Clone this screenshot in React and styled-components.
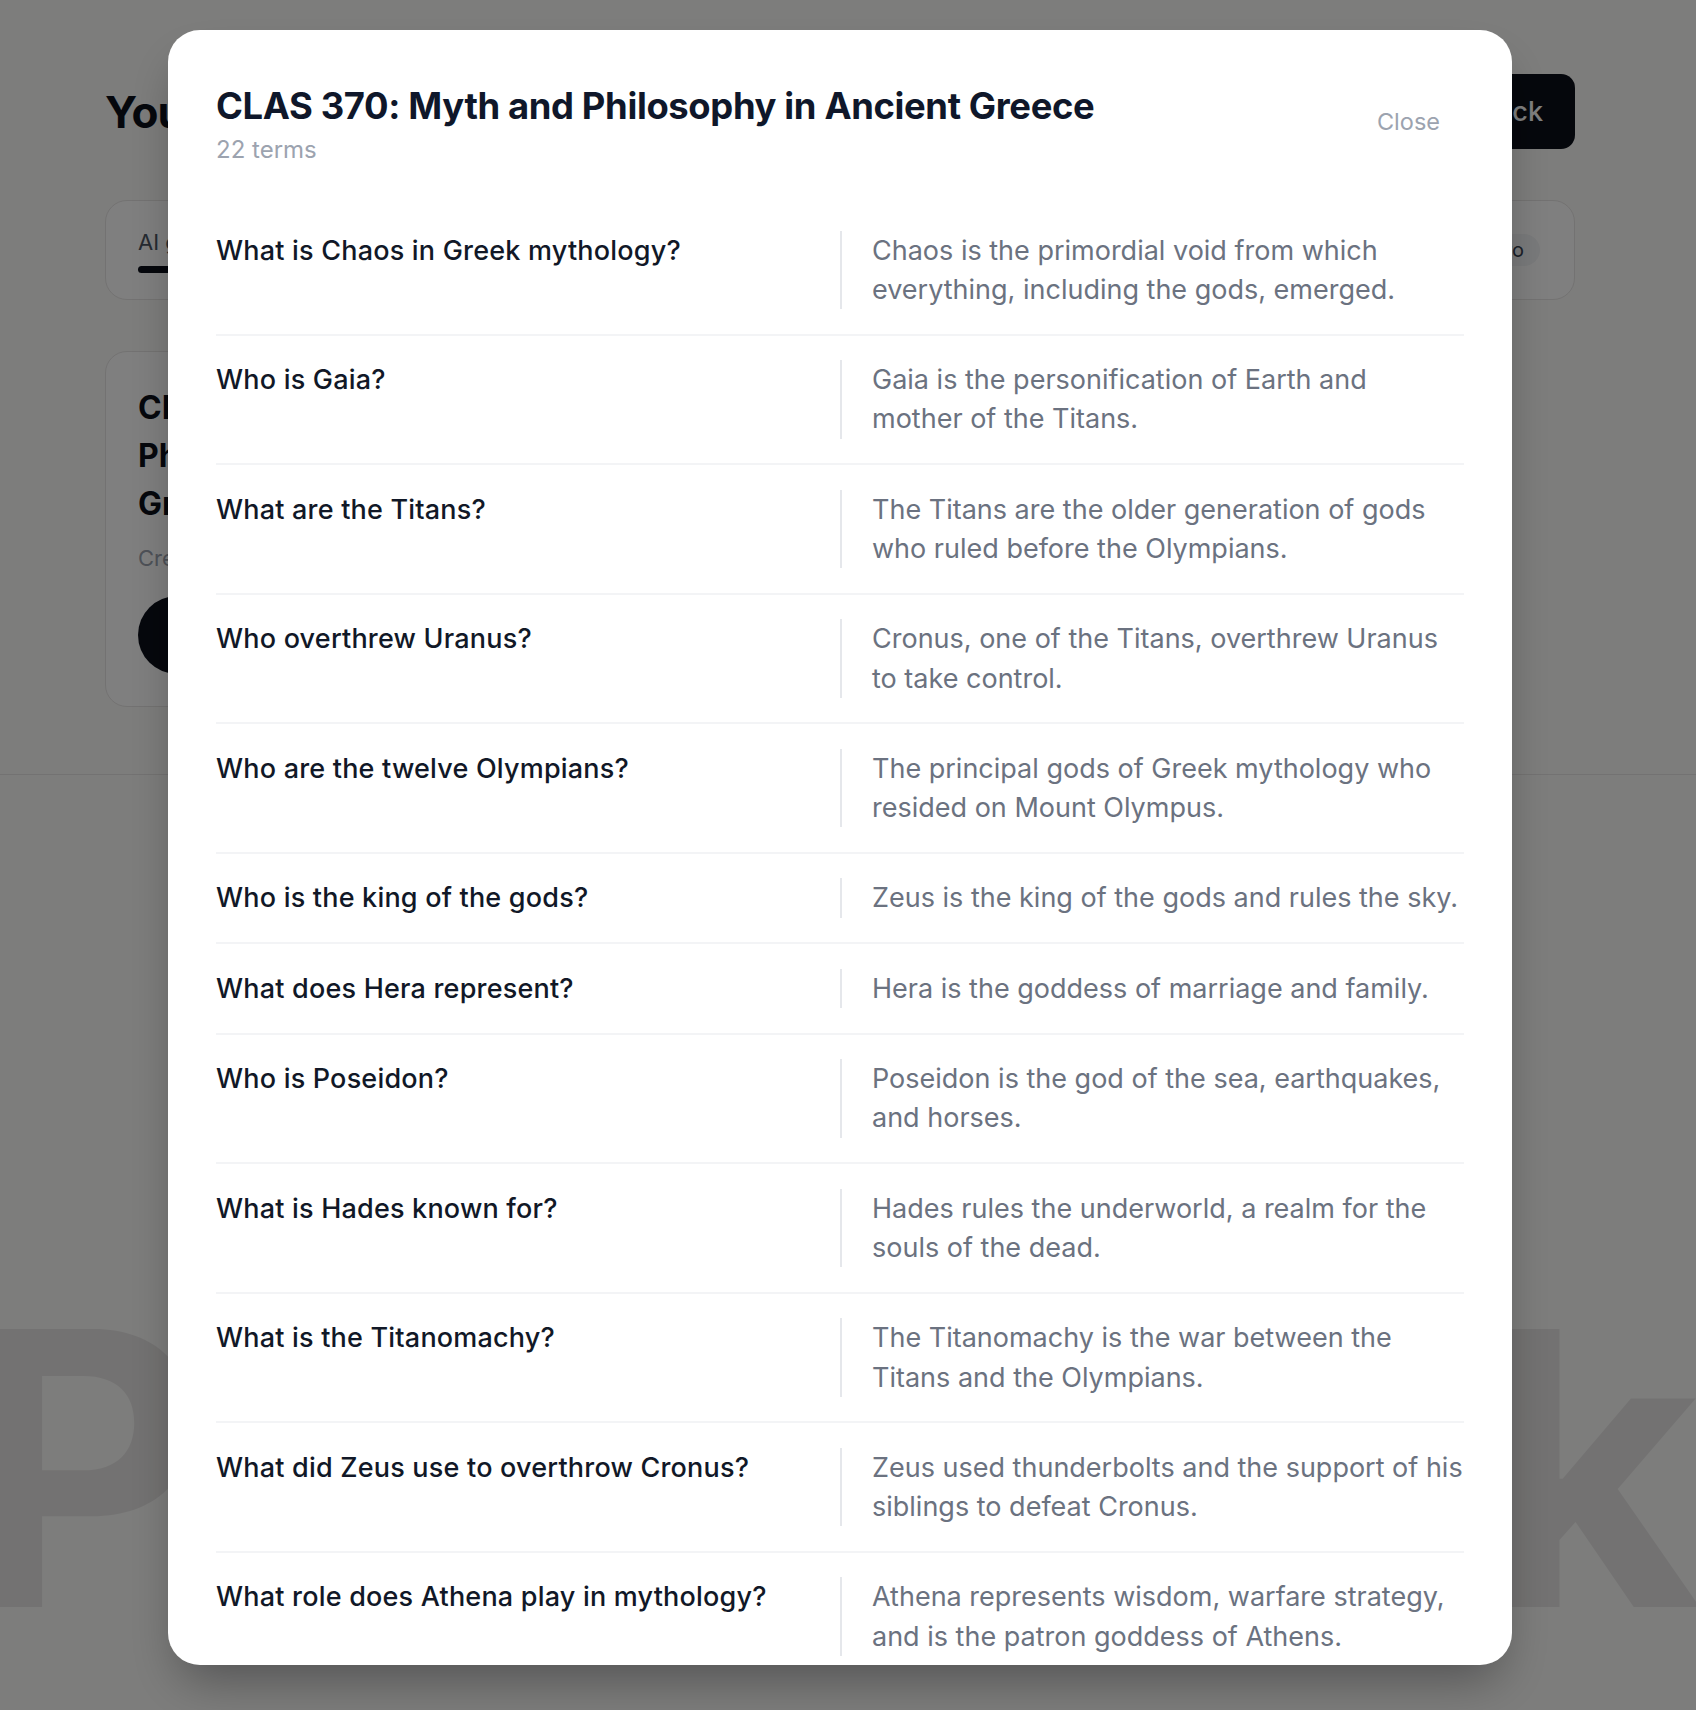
import React from 'react';
import styled, { createGlobalStyle } from 'styled-components';

const terms = [
  ['What is Chaos in Greek mythology?', 'Chaos is the primordial void from which everything, including the gods, emerged.'],
  ['Who is Gaia?', 'Gaia is the personification of Earth and mother of the Titans.'],
  ['What are the Titans?', 'The Titans are the older generation of gods who ruled before the Olympians.'],
  ['Who overthrew Uranus?', 'Cronus, one of the Titans, overthrew Uranus to take control.'],
  ['Who are the twelve Olympians?', 'The principal gods of Greek mythology who resided on Mount Olympus.'],
  ['Who is the king of the gods?', 'Zeus is the king of the gods and rules the sky.'],
  ['What does Hera represent?', 'Hera is the goddess of marriage and family.'],
  ['Who is Poseidon?', 'Poseidon is the god of the sea, earthquakes, and horses.'],
  ['What is Hades known for?', 'Hades rules the underworld, a realm for the souls of the dead.'],
  ['What is the Titanomachy?', 'The Titanomachy is the war between the Titans and the Olympians.'],
  ['What did Zeus use to overthrow Cronus?', 'Zeus used thunderbolts and the support of his siblings to defeat Cronus.'],
  ['What role does Athena play in mythology?', 'Athena represents wisdom, warfare strategy, and is the patron goddess of Athens.'],
  ['Who is Prometheus?', 'Prometheus is the Titan who stole fire from the gods and gave it to humanity.'],
  ['What is the story of Pandora?', 'Pandora opened a jar that released evils into the world, leaving only hope inside.'],
  ['What is a mythos?', 'A traditional story that explains the world through gods, heroes and origins.'],
  ['What is logos?', 'Reasoned account or argument, contrasted with mythos by early philosophers.'],
  ['Who was Thales of Miletus?', 'An early philosopher who proposed that water is the origin of all things.'],
  ['What did Xenophanes criticize?', 'He criticized Homer and Hesiod for depicting gods with human flaws.'],
  ['What is the Allegory of the Cave?', 'Plato’s image of prisoners mistaking shadows for reality.'],
  ['Why did Plato critique the poets?', 'He believed poetry imitated appearances and corrupted the soul.'],
  ['What is Hesiod’s Theogony?', 'A poem describing the origins and genealogy of the Greek gods.'],
  ['What is catharsis?', 'Aristotle’s term for the purging of emotions through tragedy.'],
];

const GlobalStyle = createGlobalStyle`
  html, body {
    margin: 0;
    padding: 0;
    height: 1710px;
    overflow: hidden;
    background: #fafaf9;
    font-family: Inter, "Noto Sans", "Liberation Sans", sans-serif;
  }
  * { box-sizing: border-box; }
`;

const Page = styled.div`
  min-height: 1710px;
`;

/* leaves room where the locked page scrollbar used to be */
const Content = styled.div`
  padding-right: 16px;
`;

const Main = styled.main`
  width: 1470px;
  margin: 0 auto;
  padding-top: 74px;
`;

const TopBar = styled.div`
  display: flex;
  align-items: center;
  justify-content: space-between;
`;

const PageTitle = styled.h1`
  margin: 0;
  font-size: 44px;
  font-weight: 700;
  color: #0b0f19;
  letter-spacing: -0.02em;
`;

const DarkButton = styled.button`
  height: 75px;
  padding: 0 32px;
  border: none;
  border-radius: 14px;
  background: #0b0f19;
  color: #fff;
  font-family: inherit;
  font-size: 27px;
  font-weight: 500;
`;

const TabsBar = styled.div`
  margin-top: 51px;
  height: 100px;
  padding: 0 34px 0 32px;
  display: flex;
  align-items: center;
  justify-content: space-between;
  background: #fff;
  border: 1px solid #e7e5e4;
  border-radius: 22px;
`;

const Tabs = styled.div`
  display: flex;
  gap: 40px;
`;

const Tab = styled.div`
  display: flex;
  flex-direction: column;
  gap: 10px;
  font-size: 22px;
  line-height: 28px;
  color: ${p => (p.$active ? '#4b5563' : '#9ca3af')};
  &::after {
    content: '';
    height: 7px;
    border-radius: 4px;
    background: ${p => (p.$active ? '#0b0f19' : 'transparent')};
  }
`;

const ProPill = styled.span`
  padding: 4px 16px;
  border-radius: 999px;
  background: #f3f4f6;
  font-size: 20px;
  color: #374151;
`;

const CardGrid = styled.div`
  margin-top: 51px;
  display: grid;
  grid-template-columns: repeat(3, 1fr);
  gap: 32px;
`;

const Card = styled.div`
  padding: 32px;
  background: #fff;
  border: 1px solid #e7e5e4;
  border-radius: 22px;
`;

const CardTitle = styled.h3`
  margin: 0;
  font-size: 32px;
  line-height: 48px;
  font-weight: 700;
  color: #0b0f19;
`;

const CardMeta = styled.div`
  margin-top: 15px;
  font-size: 22px;
  line-height: 30px;
  color: #9ca3af;
`;

const PillButton = styled.button`
  margin-top: 23px;
  height: 78px;
  padding: 0 40px;
  border: none;
  border-radius: 999px;
  background: #0b0f19;
  color: #fff;
  font-family: inherit;
  font-size: 22px;
`;

const Footer = styled.footer`
  margin-top: 67px;
  border-top: 1px solid #e7e5e4;
  padding-top: 502px;
  overflow: hidden;
`;

const Wordmark = styled.div`
  margin-left: -40px;
  font-size: 382px;
  line-height: 1;
  font-weight: 700;
  color: #e7e5e4;
  white-space: nowrap;
  letter-spacing: -0.0133em;
`;

const Overlay = styled.div`
  position: fixed;
  inset: 0;
  display: flex;
  justify-content: center;
  align-items: flex-start;
  padding: 30px 16px 0 0;
  background: rgba(0, 0, 0, 0.5);
`;

const Modal = styled.div`
  width: 1344px;
  height: 1635px;
  padding: 48px;
  background: #fff;
  border-radius: 32px;
  box-shadow: 0 25px 50px -12px rgba(0, 0, 0, 0.35);
  overflow-y: auto;
  scrollbar-width: none;
  &::-webkit-scrollbar { display: none; }
`;

const ModalHeader = styled.div`
  display: flex;
  justify-content: space-between;
  align-items: flex-start;
`;

const ModalTitle = styled.h2`
  margin: 0;
  font-size: 36.4px;
  line-height: 56px;
  font-weight: 700;
  color: #0f172a;
  letter-spacing: -0.01em;
`;

const TermCount = styled.div`
  font-size: 24px;
  line-height: 32px;
  color: #9ca3af;
`;

const CloseButton = styled.button`
  margin-top: 20px;
  padding: 8px 24px;
  border: none;
  background: none;
  font-family: inherit;
  font-size: 23.5px;
  line-height: 32px;
  color: #9ca3af;
`;

const TermList = styled.div`
  margin-top: 40px;
`;

const TermRow = styled.div`
  display: grid;
  grid-template-columns: 1fr 1fr;
  padding: 24.5px 0;
  border-bottom: 2px solid #f3f4f6;
`;

const Question = styled.div`
  padding-right: 32px;
  font-size: 27px;
  line-height: 39.3px;
  font-weight: 500;
  letter-spacing: 0.2px;
  color: #111827;
`;

const Answer = styled.div`
  padding-left: 30px;
  border-left: 2px solid #e5e7eb;
  font-size: 27px;
  line-height: 39.3px;
  color: #6b7280;
`;

export default function App() {
  return (
    <>
      <GlobalStyle />
      <Page>
        <Content>
          <Main>
            <TopBar>
              <PageTitle>Your study sets</PageTitle>
              <DarkButton>New deck</DarkButton>
            </TopBar>
            <TabsBar>
              <Tabs>
                <Tab $active>AI generated</Tab>
                <Tab>My sets</Tab>
                <Tab>Shared</Tab>
              </Tabs>
              <ProPill>Pro</ProPill>
            </TabsBar>
            <CardGrid>
              <Card>
                <CardTitle>CLAS 370: Myth and Philosophy in Ancient Greece</CardTitle>
                <CardMeta>Created 2 days ago</CardMeta>
                <PillButton>Study</PillButton>
              </Card>
            </CardGrid>
          </Main>
        </Content>
        <Footer>
          <Wordmark>Prepdeck</Wordmark>
        </Footer>
      </Page>
      <Overlay>
        <Modal>
          <ModalHeader>
            <div>
              <ModalTitle>CLAS 370: Myth and Philosophy in Ancient Greece</ModalTitle>
              <TermCount>{terms.length} terms</TermCount>
            </div>
            <CloseButton>Close</CloseButton>
          </ModalHeader>
          <TermList>
            {terms.map(([q, a]) => (
              <TermRow key={q}>
                <Question>{q}</Question>
                <Answer>{a}</Answer>
              </TermRow>
            ))}
          </TermList>
        </Modal>
      </Overlay>
    </>
  );
}
